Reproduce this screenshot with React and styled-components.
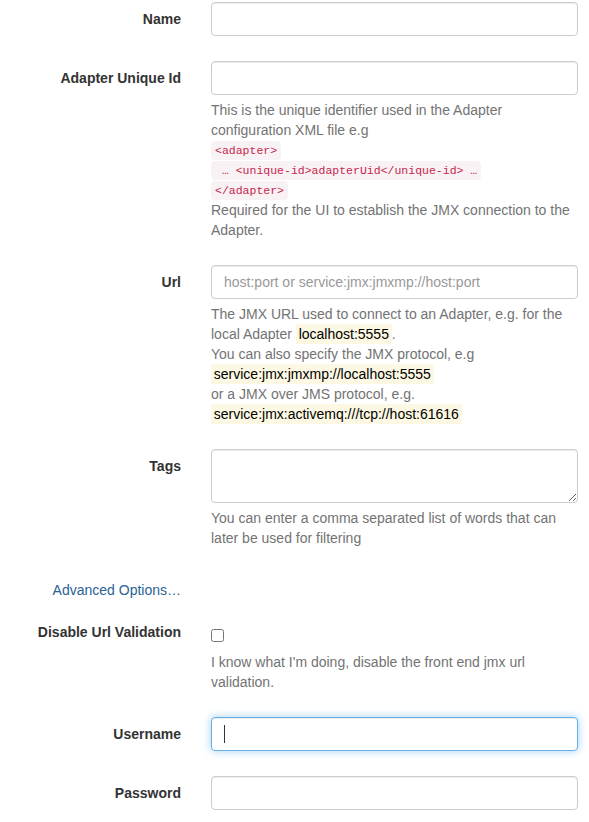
import React from "react";
import styled, { createGlobalStyle, css } from "styled-components";

const GlobalStyle = createGlobalStyle`
  body {
    margin: 0;
    background: #fff;
    font-family: "Liberation Sans", Arial, sans-serif;
    font-size: 14px;
    line-height: 20px;
    color: #333;
  }
  * { box-sizing: border-box; }
`;

const Form = styled.form`
  width: 589px;
  padding-top: 2px;
`;

const Row = styled.div`
  display: grid;
  grid-template-columns: 196px 1fr;
  margin-bottom: 15px;
`;

const Label = styled.label`
  padding: 7px 15px 0 0;
  text-align: right;
  font-weight: ${(p) => (p.plain ? "normal" : "bold")};
  line-height: 20px;
  color: #333;
`;

const LinkLabel = styled.a`
  color: #2a6296;
  text-decoration: none;
  cursor: pointer;
`;

const Field = styled.div`
  padding: 0 11px 0 15px;
`;

const inputBase = css`
  display: block;
  width: 100%;
  padding: 6px 12px;
  font-family: "Liberation Sans", Arial, sans-serif;
  font-size: 14px;
  line-height: 20px;
  color: #555;
  background: #fff;
  border: 1px solid #ccc;
  border-radius: 4px;
  box-shadow: inset 0 1px 1px rgba(0, 0, 0, 0.075);
  outline: none;
  &::placeholder {
    color: #999;
  }
`;

const Input = styled.input`
  ${inputBase}
  height: 34px;
  ${(p) =>
    p.focused &&
    css`
      border-color: #66afe9;
      box-shadow: inset 0 1px 1px rgba(0, 0, 0, 0.075),
        0 0 8px rgba(102, 175, 233, 0.6);
    `}
`;

const TextArea = styled.textarea`
  ${inputBase}
  height: 54px;
  resize: vertical;
`;

const FocusWrap = styled.div`
  position: relative;

  &::after {
    content: "";
    position: absolute;
    left: 13px;
    top: 8px;
    width: 1px;
    height: 18px;
    background: #333;
  }
`;

const Help = styled.div`
  display: block;
  margin: 5px 0 10px;
  color: #737373;
`;

const CodeLine = styled.div`
  height: 20px;
  display: flex;
  align-items: center;
`;

const Code = styled.code`
  font-family: "Liberation Mono", Consolas, monospace;
  font-size: 11.5px;
  line-height: 15px;
  padding: 2px 4px;
  color: #c7254e;
  background: #f9f2f4;
  border-radius: 4px;
  white-space: pre;
`;

const Mark = styled.mark`
  padding: 2px 2.8px;
  background: #fcf8e3;
  color: #000;
`;

const CheckWrap = styled.div`
  padding-top: 7px;
  height: 32px;
`;

const Check = styled.input`
  margin: 7px 0 0;
  width: 13px;
  height: 13px;
`;

export default function App() {
  return (
    <>
      <GlobalStyle />
      <Form onSubmit={(e) => e.preventDefault()}>
        <Row>
          <Label>Name</Label>
          <Field>
            <Input type="text" />
            <Help />
          </Field>
        </Row>

        <Row>
          <Label>Adapter Unique Id</Label>
          <Field>
            <Input type="text" />
            <Help>
              This is the unique identifier used in the Adapter configuration
              XML file e.g
              <CodeLine>
                <Code>{"<adapter>"}</Code>
              </CodeLine>
              <CodeLine>
                <Code>{" … <unique-id>adapterUid</unique-id> …"}</Code>
              </CodeLine>
              <CodeLine>
                <Code>{"</adapter>"}</Code>
              </CodeLine>
              Required for the UI to establish the JMX connection to the
              Adapter.
            </Help>
          </Field>
        </Row>

        <Row>
          <Label>Url</Label>
          <Field>
            <Input type="text" placeholder="host:port or service:jmx:jmxmp://host:port" />
            <Help>
              The JMX URL used to connect to an Adapter, e.g. for the local
              Adapter <Mark>localhost:5555</Mark>.
              <br />
              You can also specify the JMX protocol, e.g
              <br />
              <Mark>service:jmx:jmxmp://localhost:5555</Mark>
              <br />
              or a JMX over JMS protocol, e.g.
              <br />
              <Mark>service:jmx:activemq:///tcp://host:61616</Mark>
            </Help>
          </Field>
        </Row>

        <Row>
          <Label>Tags</Label>
          <Field>
            <TextArea rows={2} />
            <Help>
              You can enter a comma separated list of words that can later be
              used for filtering
            </Help>
          </Field>
        </Row>

        <Row>
          <Label plain>
            <LinkLabel>Advanced Options…</LinkLabel>
          </Label>
        </Row>

        <Row>
          <Label>Disable Url Validation</Label>
          <Field>
            <CheckWrap>
              <Check type="checkbox" />
            </CheckWrap>
            <Help>
              I know what I'm doing, disable the front end jmx url validation.
            </Help>
          </Field>
        </Row>

        <Row>
          <Label>Username</Label>
          <Field>
            <FocusWrap>
              <Input type="text" focused />
            </FocusWrap>
            <Help />
          </Field>
        </Row>

        <Row>
          <Label>Password</Label>
          <Field>
            <Input type="password" />
            <Help />
          </Field>
        </Row>
      </Form>
    </>
  );
}
